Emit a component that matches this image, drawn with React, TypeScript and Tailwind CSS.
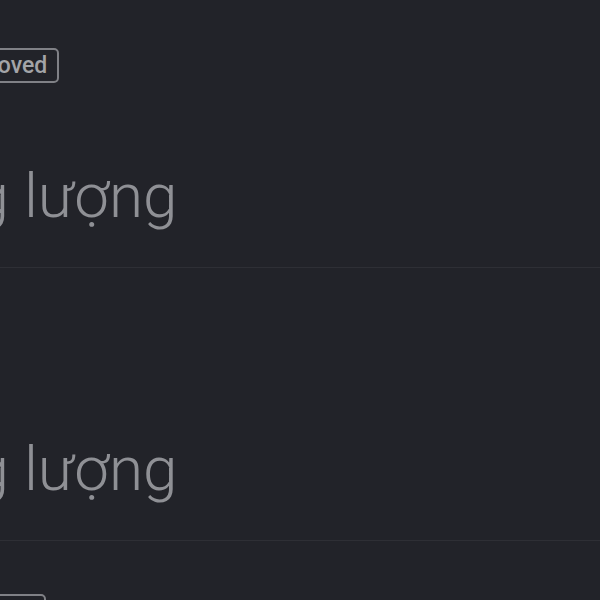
import React from "react";

const rows = [
  { badge: "Approved", text: "Năng lượng" },
  { badge: null, text: "Năng lượng" },
  { badge: "Mới", text: "Năng lượng" },
];

export default function App() {
  return (
    <div
      className="w-[600px] h-[600px] overflow-hidden bg-[#222329]"
      style={{ fontFamily: "Roboto, 'Noto Sans', sans-serif" }}
    >
      <div className="-mt-[5px] -ml-[137px] flex flex-col">
        {rows.map((r, i) => (
          <div key={i} className="h-[273px] border-b border-[#2e2f35] flex flex-col">
            <div className="h-[53px]" />
            <div className="h-[35px] flex">
              {r.badge && (
                <span
                  className={
                    (i === 2 ? "ml-[120px] " : "ml-[74px] ") +
                    "h-[35px] px-[10px] flex items-center rounded-[5px] border-2 border-[#808186] text-[#a3a4a8] text-[23px] font-medium leading-none"
                  }
                >
                  {r.badge}
                </span>
              )}
            </div>
            <div className="mt-[82px] text-[62px] font-light leading-none text-[#8f9095] whitespace-nowrap">
              {r.text}
            </div>
          </div>
        ))}
      </div>
    </div>
  );
}
